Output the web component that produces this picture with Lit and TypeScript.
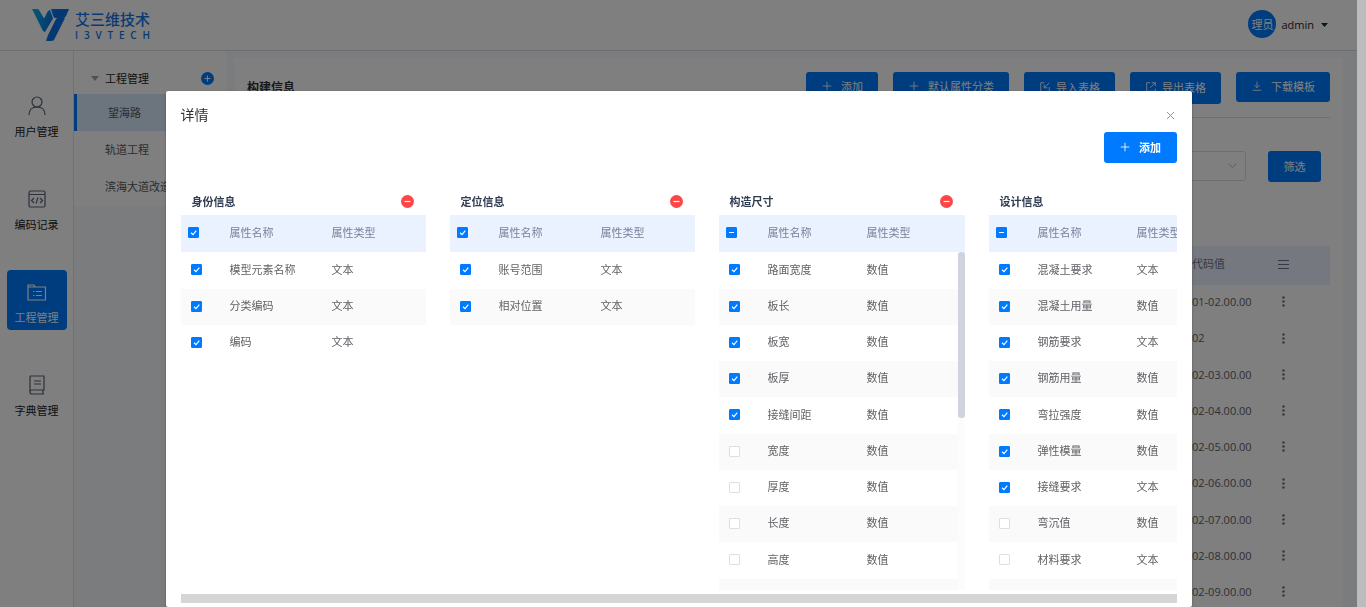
import { LitElement, html, css, svg, nothing } from "lit";
import { customElement, property } from "lit/decorators.js";

const PLUS = svg`<path d="M7 2v10M2 7h10"/>`;
const IMPORT = svg`<path d="M6 2H2v10M12 2 6 8M6 4v4h4M12 7v5H9"/>`;
const EXPORT = svg`<path d="M6 2H2v10h10V9M6 8l6-6M8 2h4v4"/>`;
const DOWNLOAD = svg`<path d="M7 2v7M4 6l3 3 3-3M2 12h10"/>`;

const icon = (shape: unknown) => html`<svg class="icon" viewBox="0 0 14 14" aria-hidden="true">${shape}</svg>`;

interface Row { name: string; type: string; on: boolean }
interface Group { title: string; rows: Row[]; mixed: boolean; scroll: boolean; wide: boolean }

const T = "文本";
const N = "数值";
const rows = (list: [string, string][], checked: number): Row[] =>
  list.map(([name, type], i) => ({ name, type, on: i < checked }));

const GROUPS: Group[] = [
  { title: "身份信息", mixed: false, scroll: false, wide: false,
    rows: rows([["模型元素名称", T], ["分类编码", T], ["编码", T]], 3) },
  { title: "定位信息", mixed: false, scroll: false, wide: false,
    rows: rows([["账号范围", T], ["相对位置", T]], 2) },
  { title: "构造尺寸", mixed: true, scroll: true, wide: true,
    rows: rows([["路面宽度", N], ["板长", N], ["板宽", N], ["板厚", N], ["接缝间距", N],
      ["宽度", N], ["厚度", N], ["长度", N], ["高度", N]], 5) },
  { title: "设计信息", mixed: true, scroll: true, wide: true,
    rows: rows([["混凝土要求", T], ["混凝土用量", N], ["钢筋要求", T], ["钢筋用量", N], ["弯拉强度", N],
      ["弹性模量", N], ["接缝要求", T], ["弯沉值", N], ["材料要求", T]], 7) },
];

const CODES = ["01-02.00.00", "02", "02-03.00.00", "02-04.00.00", "02-05.00.00",
  "02-06.00.00", "02-07.00.00", "02-08.00.00", "02-09.00.00"];

const FONT = css`"Open Sans", "Noto Sans CJK SC", sans-serif`;

@customElement("attribute-group")
export class AttributeGroup extends LitElement {
  @property({ attribute: false }) group!: Group;

  static styles = css`
    :host { display: flex; flex-direction: column; flex: none; height: 399px; }
    .head { display: flex; align-items: center; justify-content: space-between; box-sizing: border-box; height: 24px; padding: 0 12px 3px 11px; color: #303c50; }
    h3 { margin: 0; font-size: 11px; font-weight: 700; }
    .remove { display: flex; padding: 0; border: 0; background: none; }
    .remove svg { width: 13px; height: 13px; }
    .scroller { display: flex; flex: 1; min-height: 0; overflow: hidden; position: relative; width: 245px; }
    .scroller.wide { width: 246px; }
    table { width: 100%; height: fit-content; border-collapse: collapse; table-layout: fixed; }
    .pick { width: 49px; }
    .name { width: 102px; }
    .wide .name { width: 99px; }
    th, td { box-sizing: border-box; height: 36px; padding: 0 0 2px; text-align: left; font-weight: 400; line-height: 16px; white-space: nowrap; }
    th { height: 37px; background: #eaf2ff; color: #79819b; }
    td { color: #606266; }
    tbody tr:nth-child(4n+1) td { height: 37px; }
    tbody tr:nth-child(even) td { background: #fafafa; }
    th:first-child { padding-left: 7px; }
    td:first-child { padding-left: 10px; }
    input { display: block; appearance: none; box-sizing: border-box; width: 11px; height: 11px; margin: 0; border: 1px solid #dcdfe6; border-radius: 1px; background: #fff center / 11px 11px no-repeat; }
    input:checked { border-color: #007aff; background-color: #007aff; background-origin: border-box;
      background-image: url("data:image/svg+xml,%3Csvg xmlns='http://www.w3.org/2000/svg' viewBox='0 0 11 11'%3E%3Cpath d='M3 5.8l2 1.9 3.3-4' fill='none' stroke='white' stroke-width='1.2'/%3E%3C/svg%3E"); }
    input:indeterminate { border-color: #007aff; background-color: #007aff; background-origin: border-box;
      background-image: url("data:image/svg+xml,%3Csvg xmlns='http://www.w3.org/2000/svg' viewBox='0 0 11 11'%3E%3Cpath d='M3 5.5h5' stroke='white'/%3E%3C/svg%3E"); }
    .track { position: absolute; top: 37px; right: 0; bottom: 0; width: 7px; background: #fcfcfc; }
    .thumb { height: 166px; border-radius: 3px; background: #cfd4dc; }
  `;

  render() {
    const g = this.group;
    return html`
      <div class="head">
        <h3>${g.title}</h3>
        <button class="remove" aria-label="删除${g.title}">
          <svg viewBox="0 0 13 13" aria-hidden="true"><circle cx="6.5" cy="6.5" r="6.5" fill="#ff4545"/><path d="M3.5 6.5h6" stroke="#fff" stroke-width="1.2"/></svg>
        </button>
      </div>
      <div class="scroller ${g.wide ? "wide" : ""}">
        <table>
          <colgroup><col class="pick"><col class="name"><col></colgroup>
          <thead><tr>
            <th><input type="checkbox" aria-label="全选" .checked=${!g.mixed} .indeterminate=${g.mixed}></th>
            <th>属性名称</th><th>属性类型</th>
          </tr></thead>
          <tbody>${g.rows.map((r) => html`<tr>
            <td><input type="checkbox" aria-label=${r.name} .checked=${r.on}></td>
            <td>${r.name}</td><td>${r.type}</td>
          </tr>`)}
          ${g.scroll ? html`<tr><td></td><td></td><td></td></tr>` : nothing}</tbody>
        </table>
        ${g.scroll ? html`<div class="track"><div class="thumb"></div></div>` : nothing}
      </div>`;
  }
}

@customElement("detail-dialog")
export class DetailDialog extends LitElement {
  static styles = css`
    :host { display: flex; flex-direction: column; box-sizing: border-box; padding: 14px 15px 0; border-radius: 2px; background: #fff; box-shadow: 0 1px 3px rgba(0, 0, 0, 0.3); }
    header { display: flex; align-items: center; justify-content: space-between; height: 20px; padding-right: 2px; }
    h2 { margin: 0; color: #303133; font-size: 14px; font-weight: 400; line-height: 20px; }
    .close { display: flex; padding: 0; border: 0; background: none; }
    .close svg { width: 9px; height: 9px; fill: none; stroke: #909399; }
    .tools { display: flex; justify-content: flex-end; padding: 7px 0 28px; }
    .add { display: flex; align-items: center; justify-content: center; gap: 8px; box-sizing: border-box; width: 73px; height: 31px; padding: 0 0 2px; border: 0; border-radius: 3px; background: #007aff; color: #fff; font: 700 11px ${FONT}; }
    .icon { width: 12px; height: 12px; fill: none; stroke: currentColor; }
    .groups { display: flex; gap: 24px; overflow: hidden; }
    .hbar { flex: none; height: 9px; margin-top: 4px; background: #d6d6d6; }
  `;

  render() {
    return html`
      <header>
        <h2>详情</h2>
        <button class="close" aria-label="关闭"><svg viewBox="0 0 9 9"><path d="M1 1l7 7M8 1 1 8"/></svg></button>
      </header>
      <div class="tools"><button class="add">${icon(PLUS)}添加</button></div>
      <div class="groups">${GROUPS.map((g) => html`<attribute-group .group=${g}></attribute-group>`)}</div>
      <div class="hbar"></div>`;
  }
}

@customElement("app-root")
export class AppRoot extends LitElement {
  static styles = css`
    :host { display: block; height: 100vh; overflow: hidden; font: 11px/16px ${FONT}; color: #303133; }
    .window { display: grid; grid-template-columns: minmax(0, 1fr) 9px; height: 100%; }
    .page { display: flex; flex-direction: column; min-width: 0; overflow: hidden; background: #f6f8fc; }
    .scrollbar { background: #bcbcbc; }
    .topbar { display: flex; flex: none; align-items: center; justify-content: space-between; box-sizing: border-box; height: 51px; padding: 0 29px 0 32px; border-bottom: 1px solid #dcdde0; background: #fff; }
    .brand { display: flex; align-items: center; gap: 6px; color: #1474e4; }
    .mark { width: 37px; height: 32px; }
    .words { display: flex; flex-direction: column; }
    .cn { font-size: 15px; line-height: 19px; font-weight: 500; }
    .en { display: flex; justify-content: space-between; font-size: 10px; line-height: 12px; font-weight: 600; }
    .user { display: flex; align-items: center; gap: 5px; padding: 0 0 2px; border: 0; background: none; color: #20242c; font: 11px ${FONT}; }
    .avatar { display: flex; align-items: center; justify-content: center; width: 28px; height: 28px; border-radius: 50%; background: #007aff; color: #fff; }
    .caret { width: 7px; height: 4px; margin: 2px 0 0 2px; fill: #20242c; }
    .body { display: flex; flex: 1; min-height: 0; }
    .rail { display: flex; flex: none; flex-direction: column; align-items: center; gap: 33px; box-sizing: border-box; width: 74px; padding-top: 33px; border-right: 1px solid #e0e2e6; background: #fff; }
    .rail a { display: flex; flex-direction: column; align-items: center; gap: 8px; box-sizing: border-box; width: 60px; height: 60px; padding-top: 12px; border-radius: 4px; color: #1a1a1a; text-decoration: none; }
    .rail a.on { background: #007aff; color: #fff; }
    .rail svg { width: 20px; height: 20px; fill: none; stroke: #596275; stroke-width: 1.2; }
    .rail .on svg { stroke: #fff; }
    .tree { flex: none; align-self: flex-start; width: 152px; background: #fff; padding-top: 12px; }
    .root { display: flex; align-items: center; height: 31px; padding: 0 12px 0 17px; color: #1c1e22; }
    .arrow { width: 8px; height: 5px; margin-right: 6px; fill: #a0a4ac; }
    .root button { display: flex; margin-left: auto; padding: 0; border: 0; background: none; }
    .root button svg { width: 13px; height: 13px; }
    .tree a { display: flex; align-items: center; height: 37px; padding-left: 31px; color: #55585e; text-decoration: none; white-space: nowrap; }
    .tree a.on { border-left: 3px solid #007aff; background: #d8e8fb; }
    .tree a:last-child { height: 38px; }
    main { flex: 1; min-width: 0; margin: 7px 14px 0 8px; padding: 14px 13px 0; border-radius: 4px; background: #fff; }
    .title { display: flex; align-items: flex-start; justify-content: space-between; height: 45px; border-bottom: 1px solid #dcdfe6; }
    h1 { margin: 8px 0 0; font-size: 12px; line-height: 16px; font-weight: 700; color: #303133; }
    .actions { display: flex; gap: 15px; align-items: flex-start; }
    .btn { display: flex; align-items: center; justify-content: center; gap: 8px; box-sizing: border-box; height: 30px; padding: 0 15px 2px; border: 0; border-radius: 3px; background: #007aff; color: #fff; font: 11px ${FONT}; white-space: nowrap; }
    .btn.tight { gap: 5px; height: 32px; }
    .icon { width: 12px; height: 12px; fill: none; stroke: currentColor; }
    .filter { display: flex; justify-content: flex-end; align-items: flex-start; gap: 22px; padding: 33px 9px 64px 0; }
    .filter .btn { width: 53px; height: 31px; }
    .pick { display: flex; align-items: center; box-sizing: border-box; width: 180px; height: 30px; border: 1px solid #dcdfe6; border-radius: 3px; padding: 0 8px 2px; }
    select { flex: 1; appearance: none; border: 0; background: none; font: 11px ${FONT}; }
    .pick svg { width: 9px; height: 5px; fill: none; stroke: #b4b8c0; }
    table { width: 100%; border-collapse: collapse; table-layout: fixed; }
    .code-col { width: 138px; }
    th, td { box-sizing: border-box; padding: 0 0 3px; }
    th { height: 39px; background: #eaf2ff; color: #6c748c; font-weight: 400; text-align: left; }
    td { height: 36px; color: #606266; }
    tbody tr:nth-child(4n+2) td { height: 37px; }
    .row-end { display: flex; align-items: center; gap: 24px; }
    .num { width: 62px; white-space: nowrap; }
    .menu { width: 11px; height: 11px; stroke: #6c748c; fill: none; }
    .dots { display: flex; justify-content: center; width: 11px; padding: 0; border: 0; background: none; }
    .dots svg { width: 3px; height: 11px; fill: #75787e; }
    .shade { position: fixed; inset: 0 9px 0 0; display: flex; justify-content: center; align-items: flex-start; padding-top: 91px; background: rgba(0, 0, 0, 0.5); }
    detail-dialog { width: 1026px; max-width: 100%; height: calc(100vh - 91px); }
  `;

  render() {
    return html`
      <div class="window">
        <div class="page">
          <div class="topbar">
            <div class="brand">
              <svg class="mark" viewBox="0 0 37 32" aria-hidden="true">
                <defs><linearGradient id="g" gradientUnits="userSpaceOnUse" x1="0" y1="0" x2="24" y2="6"><stop offset="0" stop-color="#08b5e6"/><stop offset="1" stop-color="#0a6fe4"/></linearGradient></defs>
                <path d="M0 0h5q1.500 0 2 1l5 8.500L16 2l2-1 3 8.500L13 23l-2-1zM19 0h18l-3 7q-1 2-3 2h-7.500Q22 9 21 7zM23 12q1-3 3-3h7L22 31q-1 1-3 1h-5l2-6z" fill="url(#g)"/>
              </svg>
              <div class="words">
                <span class="cn">艾三维技术</span>
                <span class="en">${[..."I3VTECH"].map((c) => html`<span>${c}</span>`)}</span>
              </div>
            </div>
            <button class="user"><span class="avatar">理员</span>admin<svg class="caret" viewBox="0 0 7 4"><path d="M0 0h7L3.500 4z"/></svg></button>
          </div>
          <div class="body">
            <nav class="rail">
              <a href="#users"><svg viewBox="0 0 20 20"><circle cx="10" cy="6" r="5"/><path d="M2 19q0-8 8-8t8 8"/></svg>用户管理</a>
              <a href="#records"><svg viewBox="0 0 20 20"><rect x="2" y="2" width="16" height="16" rx="1.500"/><path d="M2 5.500h16M7 9l-2.500 2.500L7 14M13 9l2.500 2.500L13 14M11 8.500 9 14.500"/></svg>编码记录</a>
              <a href="#projects" class="on"><svg viewBox="0 0 20 20"><path d="M1 18V3h6l1 2h10.500v13zM1 5h7M6 9.500h1.500M9 9.500h6M6 13.500h1.500M9 13.500h6"/></svg>工程管理</a>
              <a href="#dictionary"><svg viewBox="0 0 20 20"><path d="M3 17V2q0-1 1-1h13v14H5q-2 0-2 2 0 2 2 2h12M16 15v4M7 6h7M7 9h7"/></svg>字典管理</a>
            </nav>
            <div class="tree">
              <div class="root">
                <svg class="arrow" viewBox="0 0 8 5"><path d="M0 0h8L4 5z"/></svg>工程管理
                <button aria-label="新增工程"><svg viewBox="0 0 13 13"><circle cx="6.500" cy="6.500" r="6.500" fill="#007aff"/><path d="M6.500 3.500v6M3.500 6.500h6" stroke="#fff"/></svg></button>
              </div>
              <a href="#a" class="on">望海路</a><a href="#b">轨道工程</a><a href="#c">滨海大道改造</a>
            </div>
            <main>
              <div class="title">
                <h1>构建信息</h1>
                <div class="actions">
                  <button class="btn">${icon(PLUS)}添加</button>
                  <button class="btn">${icon(PLUS)}默认属性分类</button>
                  <button class="btn tight">${icon(IMPORT)}导入表格</button>
                  <button class="btn tight">${icon(EXPORT)}导出表格</button>
                  <button class="btn">${icon(DOWNLOAD)}下载模板</button>
                </div>
              </div>
              <div class="filter">
                <div class="pick"><select aria-label="分类"><option></option></select><svg viewBox="0 0 9 5"><path d="M.5.5l4 4 4-4"/></svg></div>
                <button class="btn">筛选</button>
              </div>
              <table>
                <colgroup><col><col class="code-col"></colgroup>
                <thead><tr><th></th><th><div class="row-end"><span class="num">代码值</span><svg class="menu" viewBox="0 0 11 11"><path d="M0 1.500h11M0 5.500h11M0 9.500h11"/></svg></div></th></tr></thead>
                <tbody>${CODES.map((c) => html`<tr><td></td><td><div class="row-end"><span class="num">${c}</span><button class="dots" aria-label="更多"><svg viewBox="0 0 3 11"><circle cx="1.500" cy="1.500" r="1.300"/><circle cx="1.500" cy="5.500" r="1.300"/><circle cx="1.500" cy="9.500" r="1.300"/></svg></button></div></td></tr>`)}</tbody>
              </table>
            </main>
          </div>
        </div>
        <div class="scrollbar"></div>
      </div>
      <div class="shade"><detail-dialog role="dialog" aria-label="详情"></detail-dialog></div>`;
  }
}
